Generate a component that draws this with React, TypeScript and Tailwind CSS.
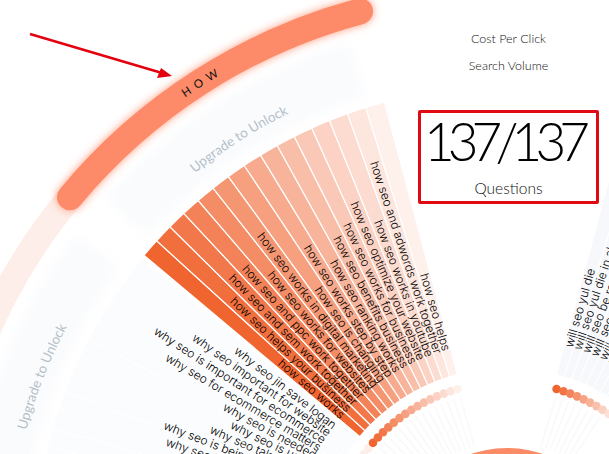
const CX = 507
const CY = 560

// angle is measured from the left horizontal, going clockwise over the top
function pt(r: number, deg: number) {
  const a = (deg * Math.PI) / 180
  return [CX - r * Math.cos(a), CY - r * Math.sin(a)]
}

function wedge(r1: number, r2: number, a1: number, a2: number) {
  const [x1, y1] = pt(r2, a1)
  const [x2, y2] = pt(r2, a2)
  const [x3, y3] = pt(r1, a2)
  const [x4, y4] = pt(r1, a1)
  return `M${x1} ${y1}A${r2} ${r2} 0 0 1 ${x2} ${y2}L${x3} ${y3}A${r1} ${r1} 0 0 0 ${x4} ${y4}Z`
}

function arc(r: number, a1: number, a2: number) {
  const [x1, y1] = pt(r, a1)
  const [x2, y2] = pt(r, a2)
  return `M${x1} ${y1}A${r} ${r} 0 0 1 ${x2} ${y2}`
}

function mix(t: number) {
  const from = [240, 100, 48]
  const to = [254, 240, 235]
  return `rgb(${from.map((c, i) => Math.round(c + (to[i] - c) * t)).join(',')})`
}

const STEP = 35 / 15

// darkest (lowest angle) first
const howRows = [
  'how seo works',
  'how seo helps your business',
  'how seo and sem work together',
  'how seo and ppc work together',
  'how seo works for websites',
  'how seo works in digital marketing',
  'how seo is changing',
  'how seo works step by step',
  'how seo ranking works',
  'how seo benefits business',
  'how seo works for business',
  'how seo optimize your website',
  'how seo works in youtube',
  'how seo and adwords work together',
  'how seo helps',
]

// going away from the how sector, towards the left edge
const whyRows = [
  'why seo jin save logan',
  'why seo important for website',
  'why seo is important for ecommerce',
  'why seo for ecommerce matters',
  'why seo is needed',
  'why seo is used',
  'why seo takes time',
  'why seo is being used now',
  'why seo is beneficial now',
]

const willRows = [
  'will seo yul die',
  'will seo yul die in alela',
  'will seo be replaced',
  'will seo die',
  'will seo work',
  'will seo change',
]

function Wheel() {
  return (
    <svg viewBox="0 0 609 454" className="absolute inset-0 h-[454px] w-[609px]">
      <defs>
        <path id="how-arc" d={arc(563.5, 40, 75)} />
        <path id="up-how" d={arc(497, 40, 75)} />
        <path id="up-why" d={arc(498, 4, 39)} />
      </defs>

      {/* faint outer bands */}
      <g className="blur-[6px]">
        <path d={wedge(485, 540, 42, 73)} fill="#fafbfd" />
        <path d={wedge(485, 540, 2, 37)} fill="#fafbfd" />
      </g>
      <path d={wedge(555, 581, 0, 40)} fill="#fdeee9" />

      {/* locked why sector */}
      {Array.from({ length: 16 }, (_, i) => (
        <path
          key={i}
          d={wedge(192, 473, 39.5 - STEP * (i + 1), 39.5 - STEP * i)}
          fill="#fbfcfd"
          stroke="#ffffff"
          strokeWidth="1"
        />
      ))}
      {/* locked will sector */}
      {Array.from({ length: 15 }, (_, i) => (
        <path
          key={i}
          d={wedge(192, 473, 105 + STEP * i, 105 + STEP * (i + 1))}
          fill="#f6f8fb"
          stroke="#ffffff"
          strokeWidth="1"
        />
      ))}

      {/* how sector */}
      {howRows.map((_, i) => (
        <path
          key={i}
          d={wedge(192, 474, 40 + STEP * i, 40 + STEP * (i + 1))}
          fill={mix(i / 14)}
          stroke="#ffffff"
          strokeWidth="1.2"
        />
      ))}

      {/* spokes under the dots */}
      {Array.from({ length: 46 }, (_, i) => {
        const a = 18 + i * STEP
        if (a > 75 && a < 105) return null
        const [x1, y1] = pt(118, a)
        const [x2, y2] = pt(170, a)
        return <line key={i} x1={x1} y1={y1} x2={x2} y2={y2} stroke="#f8f9fb" strokeWidth="1.5" />
      })}

      {/* dots */}
      {Array.from({ length: 10 }, (_, i) => {
        const [x, y] = pt(178, 40 - STEP * (i + 0.5))
        return <circle key={i} cx={x} cy={y} r="4.3" fill="#fdeee9" />
      })}
      {howRows.map((_, i) => {
        const [x, y] = pt(178, 40 + STEP * (i + 0.5))
        return <circle key={i} cx={x} cy={y} r="4.3" fill={mix(i / 14)} />
      })}
      {Array.from({ length: 10 }, (_, i) => {
        const [x, y] = pt(178, 105 + STEP * (i + 0.5))
        return <circle key={i} cx={x} cy={y} r="4.3" fill={mix(i / 9)} />
      })}

      <circle cx={CX} cy={CY} r="112" fill="#fb8a66" />

      {/* row labels, all ending at the same radius */}
      <g fontFamily="Inter, sans-serif" fontSize="11.9" fontWeight="300" fill="#000000">
        {howRows.map((t, i) => {
          const a = 40 + STEP * (i + 0.5)
          const [x, y] = pt(218, a)
          return (
            <text key={t} x={x} y={y} dy="4" textAnchor="end" transform={`rotate(${a} ${x} ${y})`}>
              {t}
            </text>
          )
        })}
        {whyRows.map((t, i) => {
          const a = 39 - STEP * (i + 0.5)
          const [x, y] = pt(218, a)
          return (
            <text key={t} x={x} y={y} dy="4" textAnchor="end" transform={`rotate(${a} ${x} ${y})`}>
              {t}
            </text>
          )
        })}
        {willRows.map((t, i) => {
          const a = 105 + STEP * (i + 0.5)
          const [x, y] = pt(222, a)
          return (
            <text key={t} x={x} y={y} dy="4" transform={`rotate(${a - 180} ${x} ${y})`}>
              {t}
            </text>
          )
        })}
      </g>

      <g fontFamily="Lato, sans-serif" fontSize="13.5" fill="#b4c0c9" textAnchor="middle">
        <text>
          <textPath href="#up-how" startOffset="50%">Upgrade to Unlock</textPath>
        </text>
        <text>
          <textPath href="#up-why" startOffset="50%">Upgrade to Unlock</textPath>
        </text>
      </g>

      {/* selected group */}
      <path
        d={arc(568, 39.7, 75)}
        fill="none"
        stroke="#fd8a68"
        strokeWidth="26"
        strokeLinecap="round"
        className="drop-shadow-[0_0_4px_#ff9a7c]"
      />
      <text fontFamily="Lato, sans-serif" fontSize="11.5" fill="#111111" letterSpacing="5.5" textAnchor="middle">
        <textPath href="#how-arc" startOffset="50%">HOW</textPath>
      </text>

      {/* annotation arrow */}
      <line x1="30" y1="34" x2="162" y2="73" stroke="#e3000f" strokeWidth="2.5" />
      <polygon points="172,76 157,78 161,68" fill="#e3000f" />
    </svg>
  )
}

export default function App() {
  return (
    <div className="relative h-[454px] w-[609px] overflow-hidden bg-white font-['Lato',sans-serif] text-[#111]">
      <Wheel />
      <div className="relative ml-[418px] flex w-[181px] flex-col items-center">
        <div className="mt-[31px] text-[12.5px] font-light leading-[16px]">Cost Per Click</div>
        <div className="mt-[11px] text-[12.5px] font-light leading-[16px]">Search Volume</div>
        <div className="mt-[36px] flex h-[94px] w-[181px] flex-col items-center rounded-[2px] border-[3px] border-[#e00b12]">
          <div className="mt-[-2px] mr-[10px] text-[53px] font-light leading-[60px] tracking-[-0.13em] text-black">137/137</div>
          <div className="mt-[7px] text-[15.5px] font-light leading-[20px]">Questions</div>
        </div>
      </div>
    </div>
  )
}
